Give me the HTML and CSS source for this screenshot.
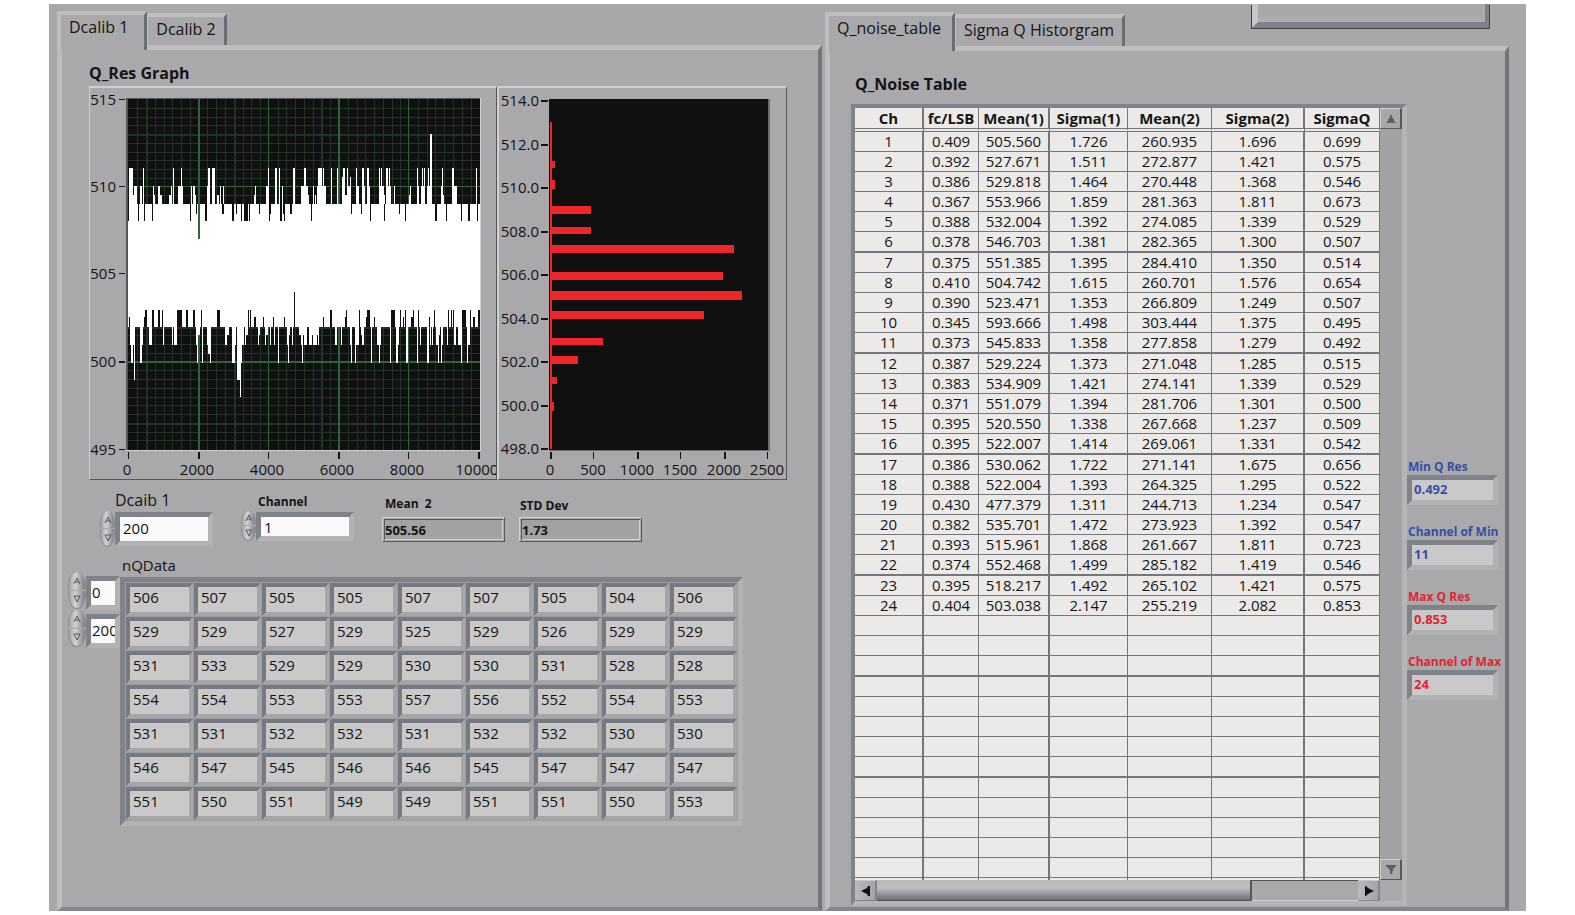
FILE: index.html
```html
<!DOCTYPE html>
<html lang="en">
<head>
  <meta charset="UTF-8">
  <meta name="viewport" content="width=device-width, initial-scale=1.0">
  <title>Dcalib | Q noise</title>
  <link rel="stylesheet" href="styles.css">
</head>
<body>
  <main class="front-panel">

    <section class="tab-control">
      <div class="tab-strip calib-tabs">
        <button type="button" class="tab active">Dcalib 1</button>
        <button type="button" class="tab">Dcalib 2</button>
      </div>
      <div class="tab-page calib">
        <h2>Q_Res Graph</h2>
        <div class="graphs">
          <div class="graph">
            <svg id="wave" width="406" height="391" viewBox="90 88 406 391" role="img" aria-label="Q_Res Graph">
              <rect x="126" y="98" width="355" height="353" fill="#d0d0d2"/>
              <rect x="126" y="98" width="354" height="352" fill="#55565a"/>
              <rect x="128" y="99" width="352" height="351" fill="#101010"/>
              <g id="grid"></g>
              <g id="trace" transform="scale(0.333333)"></g>
              <g id="wave-axis"></g>
            </svg>
          </div>
          <div class="graph">
            <svg id="histogram" width="287" height="391" viewBox="499 88 287 391" role="img" aria-label="Histogram">
              <rect x="549" y="99" width="221" height="352" fill="#6c6e73"/>
              <rect x="549" y="99" width="219" height="351" fill="#101010"/>
              <g id="bars" fill="#ee2529">
                <rect x="550" y="122" width="2" height="327"/>
              </g>
              <g id="hist-axis"></g>
            </svg>
          </div>
        </div>

        <div class="controls">
          <div class="control">
            <label for="dcaib">Dcaib 1</label>
            <div class="numeric">
              <span class="spinner tall"></span>
              <input id="dcaib" class="well white" type="text" value="200">
            </div>
          </div>
          <div class="control small channel">
            <label for="channel">Channel</label>
            <div class="numeric">
              <span class="spinner"></span>
              <input id="channel" class="well white" type="text" value="1">
            </div>
          </div>
          <div class="control small flat mean">
            <label for="mean">Mean&nbsp; 2</label>
            <input id="mean" type="text" value="505.56" readonly>
          </div>
          <div class="control small flat std">
            <label for="std">STD Dev</label>
            <input id="std" type="text" value="1.73" readonly>
          </div>
        </div>

        <h3 id="nq-label">nQData</h3>
        <div class="array">
          <div class="array-index">
            <div class="numeric">
              <span class="spinner tall"></span>
              <input class="well white" type="text" value="0" aria-label="Row index">
            </div>
            <div class="numeric">
              <span class="spinner tall"></span>
              <input class="well white" type="text" value="200" aria-label="Column index">
            </div>
          </div>
          <table class="array-data" id="nqdata" aria-labelledby="nq-label"></table>
        </div>
      </div>
    </section>

    <section class="tab-control">
      <div class="tab-strip noise-tabs">
        <button type="button" class="tab active">Q_noise_table</button>
        <button type="button" class="tab">Sigma Q Historgram</button>
        <button type="button" class="big-button" aria-label="Run"></button>
      </div>
      <div class="tab-page noise">
        <div class="noise-main">
          <h2>Q_Noise Table</h2>
          <div class="table-frame">
            <div class="table-view">
              <table class="noise-table">
                <colgroup>
                  <col class="c-ch"><col class="c-fc"><col class="c-m1"><col class="c-s1"><col class="c-m2"><col class="c-s2"><col class="c-sq">
                </colgroup>
                <thead>
                  <tr><th>Ch</th><th>fc/LSB</th><th>Mean(1)</th><th>Sigma(1)</th><th>Mean(2)</th><th>Sigma(2)</th><th>SigmaQ</th></tr>
                </thead>
                <tbody id="noise-rows"></tbody>
              </table>
            </div>
            <div class="vscroll">
              <button type="button" aria-label="Scroll up"><svg width="10" height="10" viewBox="0 0 10 10"><path d="M5 0L7 5H8V7L10 9H0L2 7V5H3Z" fill="#5d5f65"/></svg></button>
              <button type="button" aria-label="Scroll down"><svg width="10" height="10" viewBox="0 0 10 10"><path d="M0 0H10V1L7 4L6 9H4V5L0 1Z" fill="#5d5f65"/></svg></button>
            </div>
            <div class="hscroll">
              <button type="button" aria-label="Scroll left"><svg width="10" height="10" viewBox="0 0 10 10"><path d="M0 5L6 2L7 0H9V10H7L6 8Z" fill="#101010"/></svg></button>
              <div class="track"><div class="thumb"></div></div>
              <button type="button" aria-label="Scroll right"><svg width="10" height="10" viewBox="0 0 10 10"><path d="M10 5L4 2L2 0H1V10H2L4 8Z" fill="#101010"/></svg></button>
            </div>
          </div>
        </div>
        <div class="results">
          <div class="result min">
            <label for="min-q">Min Q Res</label>
            <input id="min-q" class="well" type="text" value="0.492" readonly>
          </div>
          <div class="result min">
            <label for="min-ch">Channel of Min</label>
            <input id="min-ch" class="well" type="text" value="11" readonly>
          </div>
          <div class="result max">
            <label for="max-q">Max Q Res</label>
            <input id="max-q" class="well" type="text" value="0.853" readonly>
          </div>
          <div class="result max">
            <label for="max-ch">Channel of Max</label>
            <input id="max-ch" class="well" type="text" value="24" readonly>
          </div>
        </div>
      </div>
    </section>

  </main>
  <script src="script.js"></script>
</body>
</html>
```
FILE: styles.css
```css
* {
  box-sizing: border-box;
}
body {
  margin: 0;
  background: #fff;
  color: #141414;
  font-family: "Open Sans", "Noto Sans", sans-serif;
  font-size: 15px;
  line-height: 20px;
}
button, input {
  font: inherit;
  color: inherit;
  margin: 0;
  padding: 0;
}
h2, h3 {
  margin: 0;
  font-size: 16px;
  line-height: 20px;
}
h3 {
  font-size: 15px;
  font-weight: normal;
}
.front-panel {
  display: grid;
  grid-template-columns: 765fr 684fr;
  gap: 3px;
  min-height: calc(100vh - 8px);
  margin: 4px 49px 0;
  padding: 0 17px 0 8px;
  background: #a8a8aa;
}

/* tabs */
.tab-control {
  display: flex;
  flex-direction: column;
  min-width: 0;
}
.tab-strip {
  display: flex;
  align-items: flex-end;
  height: 42px;
}
.calib-tabs {
  height: 41px;
}
.tab {
  height: 32px;
  padding: 0 8px 5px 8px;
  background: #a9a9ab;
  border: solid;
  border-width: 4px 3px 0 1px;
  border-color: #bfbfc1 #6b6d73 #a9a9ab #bfbfc1;
  border-radius: 2px 2px 0 0;
  font-size: 16px;
  white-space: nowrap;
}
.tab.active {
  position: relative;
  height: 39px;
  margin-bottom: -5px;
  padding: 0 16px 12px 8px;
  border-left-width: 4px;
}
.noise-tabs .tab.active {
  padding-right: 11px;
}
.big-button {
  align-self: flex-start;
  width: 237px;
  height: 24px;
  margin: 0 20px 0 auto;
  background: #a8a8aa;
  border: solid;
  border-width: 0 4px 6px 6px;
  border-color: #8a8c92 #7d8086 #7d8086 #c6c6c8;
  box-shadow: inset 0 -4px 4px #b0b0b2, 1px 1px 0 #3d3e42, -1px 1px 0 #3d3e42;
}
.tab-page {
  flex: 1;
  background: #a9a9ab;
  border: solid;
  border-width: 5px 4px 4px 5px;
  border-color: #bdbdbf #73757b #84868b #bdbdbf;
}

/* left page */
.calib {
  padding: 13px 0 0 6px;
}
.calib h2 {
  margin: 0 0 3px 21px;
}
.graphs {
  display: flex;
  margin-left: 21px;
}
.graph {
  border: solid;
  border-width: 2px 1px 1px 1px;
  border-color: #d0d0d2 #55565a #55565a #d0d0d2;
}
.graph + .graph {
  border-left-width: 2px;
}
.graph svg {
  display: block;
}
.graph svg text {
  font-size: 15px;
  fill: #141414;
}
#grid, #trace, #bars, .tick {
  shape-rendering: crispEdges;
}
.controls {
  display: flex;
  align-items: flex-start;
  margin: 10px 0 8px 32px;
}
.control label {
  display: block;
  margin: 0 0 2px 15px;
  font-size: 16px;
}
.control.small {
  padding-top: 2px;
}
.control.small label {
  margin: 0 0 0 17px;
  font-size: 12px;
  font-weight: bold;
}
.channel {
  margin-left: 28px;
}
.control.flat {
  padding-top: 4px;
}
.control.flat label {
  margin: 0 0 3px 3px;
}
.mean {
  margin-left: 28px;
}
.std {
  margin-left: 14px;
}
.control.std label {
  margin: 2px 0 1px 1px;
}
.flat input {
  display: block;
  width: 123px;
  height: 25px;
  padding-left: 2px;
  background: #a2a2a4;
  border: 1px solid;
  border-color: #d0d0d2 #55565a #55565a #d0d0d2;
  box-shadow: inset 0 0 0 1px #a8a8aa, inset 2px 2px 0 #55565a, inset -2px -2px 0 #d0d0d2;
  font-size: 13px;
  font-weight: bold;
}
.well {
  display: block;
  padding-bottom: 2px;
  background: #c9c9c9;
  border: 5px solid;
  border-color: #7f8288 #b2b2b4 #b2b2b4 #7f8288;
  border-radius: 0;
}
.well.white {
  background: #fafafa;
}
.numeric {
  display: flex;
}
.controls .numeric .well {
  width: 98px;
  height: 34px;
  padding-left: 3px;
}
.controls .channel .numeric .well {
  height: 29px;
  padding-bottom: 0;
}
.spinner {
  display: flex;
  flex-direction: column;
  gap: 1px;
  width: 15px;
  height: 30px;
  margin-top: -1px;
}
.spinner.tall {
  height: 36px;
}
.spinner button {
  flex: 1;
  display: flex;
  align-items: center;
  justify-content: center;
  min-height: 0;
  background: linear-gradient(90deg, #a2a3a6, #d2d2d4 40%, #7d8086);
  border: 1px solid #8b8d92;
  border-width: 0 1px;
  border-radius: 50% 50% 2px 2px / 80% 80% 2px 2px;
}
.spinner button + button {
  border-bottom-width: 1px;
  border-radius: 2px 2px 50% 50% / 2px 2px 80% 80%;
}

/* nQData array */
#nq-label {
  margin-left: 54px;
}
.array {
  display: flex;
  align-items: flex-start;
  margin-top: 2px;
}
.array-index {
  width: 52px;
  margin-top: -5px;
}
.array-index .numeric {
  height: 38px;
}
.array-index .spinner {
  width: 18px;
  height: 37px;
  margin-top: 0;
}
.array-index .well {
  width: 34px;
  height: 34px;
  margin-top: 4px;
  padding-left: 1px;
}
.array-data {
  border: 5px solid;
  border-color: #7f8288 #b2b2b4 #b2b2b4 #7f8288;
  border-spacing: 1px;
  background: #9c9da1;
}
.array-data td {
  width: 67px;
  height: 33px;
  padding: 0 0 5px 3px;
  background: #c9c9c9;
  border: 4px solid;
  border-color: #777a81 #a6a6a8 #a6a6a8 #777a81;
}

/* right page */
.noise {
  display: flex;
  padding: 22px 0 1px 21px;
}
.noise-main {
  flex: 1;
  display: flex;
  flex-direction: column;
  min-width: 0;
}
.noise h2 {
  margin: 1px 0 10px 4px;
}
.table-frame {
  flex: 1;
  display: grid;
  grid-template-columns: 1fr 22px;
  grid-template-rows: 1fr 21px;
  border: solid;
  border-width: 4px 5px 5px 4px;
  border-color: #7f8288 #b5b5b7 #b5b5b7 #7f8288;
}
.table-view {
  height: 772px;
  overflow: hidden;
}
.noise-table {
  width: 100%;
  table-layout: fixed;
  border-collapse: separate;
  border-spacing: 0;
  background: #ebeae9;
  text-align: center;
}
.c-ch { width: 69px; }
.c-fc { width: 55px; }
.c-m1 { width: 71px; }
.c-s1 { width: 78px; }
.c-m2 { width: 84px; }
.c-s2 { width: 93px; }
.c-sq { width: 75px; }
.noise-table th,
.noise-table td {
  height: 20px;
  padding: 0;
  line-height: 19px;
  border: solid #74777c;
  border-width: 0 1px 1px 0;
}
.noise-table th {
  height: 24px;
  line-height: 20px;
  border-bottom: 4px double #74777c;
}
.noise-table th:nth-child(1), .noise-table td:nth-child(1),
.noise-table th:nth-child(3), .noise-table td:nth-child(3),
.noise-table th:nth-child(6), .noise-table td:nth-child(6) {
  border-right-width: 2px;
}
.noise-table .thick td {
  height: 21px;
  border-bottom-width: 2px;
}
.vscroll {
  display: flex;
  flex-direction: column;
  justify-content: space-between;
  background: #a2a2a4;
}
.vscroll button,
.hscroll button {
  display: flex;
  align-items: center;
  justify-content: center;
  width: 22px;
  height: 21px;
  background: #a8a8aa;
  border: solid;
  border-width: 1px 2px 1px 1px;
  border-color: #d0d0d2 #55565a #55565a #d0d0d2;
}
.hscroll {
  display: flex;
}
.hscroll button {
  background: linear-gradient(90deg, #b9b9bb, #a2a4a9);
  border-color: #c6c6c8 #84868b #84868b #b9b9bb;
}
.track {
  flex: 1;
  border-top: 1px solid #55565a;
  border-bottom: 1px solid #d0d0d2;
}
.thumb {
  width: 78%;
  height: 21px;
  margin-top: -1px;
  background: linear-gradient(#b9b9bb, #bebec0 40%, #6b6e76);
  border-right: 2px solid #55565a;
  border-bottom: 1px solid #55565a;
}
.results {
  width: 98px;
  padding-top: 386px;
}
.result {
  height: 65px;
  font-size: 12px;
  font-weight: bold;
}
.result label {
  display: block;
  margin-left: 1px;
  line-height: 16px;
  white-space: nowrap;
}
.result .well {
  width: 91px;
  height: 30px;
  padding-left: 2px;
  font-size: 13px;
}
.min {
  color: #3350a8;
}
.max {
  color: #e02430;
}
```
FILE: script.js
```js
const SVG = 'http://www.w3.org/2000/svg';

function draw(parent, tag, attrs, text) {
  const el = document.createElementNS(SVG, tag);
  for (const key in attrs) el.setAttribute(key, attrs[key]);
  if (text !== undefined) el.textContent = text;
  document.getElementById(parent).appendChild(el);
}

function box(parent, x, y, width, height, fill) {
  const attrs = { x, y, width, height };
  if (fill) attrs.fill = fill;
  draw(parent, 'rect', attrs);
}

// spinner buttons
document.querySelectorAll('.spinner').forEach(spinner => {
  spinner.innerHTML =
    '<button type="button" aria-label="Increase"><svg width="8" height="8" viewBox="0 0 8 8"><path d="M1 7L4 1L7 7M2 5H6" fill="none" stroke="#55575c"/></svg></button>' +
    '<button type="button" aria-label="Decrease"><svg width="8" height="8" viewBox="0 0 8 8"><path d="M1 1H7L4 7Z" fill="none" stroke="#55575c"/></svg></button>';
});

// waveform grid
for (let i = 1; i < 40; i++) {
  if (i % 8) box('grid', Math.round(128.5 + i * 8.77), 99, i % 10 === 2 ? 2 : 1, 351, '#203324');
}
for (let i = 1; i < 40; i++) {
  if (i % 10) box('grid', 128, Math.round(99 + i * 8.75), 352, i % 11 === 4 ? 2 : 1, '#203324');
}
box('grid', 128, 186, 352, 1, '#2f6339');
box('grid', 128, 361, 352, 2, '#2f6339');
box('grid', 198, 99, 2, 351, '#2f6339');
box('grid', 268, 99, 1, 351, '#2f6339');
box('grid', 338, 99, 2, 351, '#2f6339');
box('grid', 408, 99, 1, 351, '#2f6339');

// waveform trace, columns given in thirds of a pixel from the plot
function columns(list, top, bottom, fill) {
  list.split(' ').forEach(item => {
    const [from, to] = item.split('-').map(Number);
    box('trace', from + 120, top, to - from, bottom - top, fill);
  });
}
const WHITE = '#fff', BLACK = '#101010';
box('trace', 384, 612, 1056, 369, WHITE);
columns('1170-1176', 402, 612, WHITE);
columns('267-279 309-312 399-402 423-426 504-510 516-525 684-687 705-711 717-720 759-765 792-798 834-846 849-852 873-876 891-894 909-915 921-924 948-951 966-972 981-987 1017-1020 1023-1026 1038-1044 1047-1050 1131-1134 1146-1149 1152-1155 1164-1167 1206-1209 1236-1242 1308-1311', 504, 612, WHITE);
columns('930-933 906-909', 531, 612, WHITE);
columns('282-291 300-306 339-342 354-360 393-396 414-429 453-456 459-465 501-510 516-525 540-543 549-552 645-648 678-687 726-729 783-804 819-822 831-858 906-915 921-933 948-957 966-975 981-990 1017-1032 1038-1053 1062-1065 1110-1113 1131-1137 1143-1155 1161-1176 1203-1209 1236-1251 1308-1311', 558, 612, WHITE);
columns('279-291 342-345 360-366 387-396 465-468 531-537 642-648 804-807 825-828 915-921 1032-1035 1107-1113 1209-1212', 585, 612, WHITE);
columns('264-267 294-297 312-315 336-339 450-453 495-501 576-582 603-606 612-624 627-630 687-690 720-726 732-735 813-816 990-993 1032-1035 1095-1098 1185-1191 1218-1221 1263-1266 1284-1290 1311-1314', 612, 663, BLACK);
columns('468-471 546-552 588-591 657-660 690-693 729-732 750-756 933-936 963-966 1077-1080', 612, 641, BLACK);
columns('474-480', 612, 717, '#2f6339');

columns('474-480 561-567 618-624 657-660 678-684 747-750 777-783 789-792 816-819 831-834 963-966 1197-1200', 981, 1005, WHITE);
columns('270-273 279-282 306-309 327-336 369-372 396-399 402-411 468-471 501-504 555-561 585-588 606-612 615-618 654-657 675-678 690-693 702-705 741-744 756-759 783-786 792-801 807-816 819-831 834-837 885-891 903-906 930-933 948-957 966-972 1011-1017 1020-1023 1074-1077 1140-1143 1170-1173 1176-1179 1188-1194 1206-1209 1221-1224 1242-1248 1254-1263 1284-1290', 981, 1035, WHITE);
columns('504-510', 981, 1062, WHITE);
columns('273-279 300-306 471-474 486-489 510-513 576-585 603-606 714-717 744-747 786-789 933-936 945-948 993-996 1017-1020 1050-1053 1068-1074 1098-1104 1131-1134 1161-1167 1194-1197 1203-1206 1263-1266 1281-1284', 981, 1089, WHITE);
columns('282-285 591-600', 981, 1140, WHITE);
columns('600-603', 981, 1191, WHITE);
columns('762-765', 876, 981, BLACK);
columns('315-321 336-342 354-360 366-369 411-426 438-444 459-465 483-486 531-540 624-627 630-633 870-876 918-921 957-960 981-990 1053-1065 1080-1083 1095-1098 1119-1122 1134-1137 1182-1185 1224-1227 1233-1236 1239-1242 1266-1278 1290-1293 1314-1320', 930, 981, BLACK);
columns('267-270 312-315 642-648 669-672 699-702 732-735 849-852 915-918 978-981 1002-1005 1089-1092 1113-1119 1167-1170 1299-1305', 951, 981, BLACK);

// waveform axes
function tick(parent, x, y, width, height) {
  draw(parent, 'rect', { x, y, width, height, class: 'tick', fill: '#141414' });
}
[[515, 99], [510, 186], [505, 273], [500, 361], [495, 449]].forEach(([value, y]) => {
  tick('wave-axis', 119, y, 6, value === 500 ? 2 : 1);
  draw('wave-axis', 'text', { x: 116, y: y + 6, 'text-anchor': 'end' }, value);
});
[[0, 128], [2000, 198], [4000, 268], [6000, 338], [8000, 408], [10000, 478]].forEach(([value, x]) => {
  tick('wave-axis', x, 452, value % 4000 ? 2 : 1, 7);
  draw('wave-axis', 'text', { x: x - 1, y: 475, 'text-anchor': 'middle' }, value);
});

// histogram: [top, height, right edge]
[[161, 7, 555], [180, 9, 555], [206, 8, 591], [227, 7, 591], [245, 8, 734], [272, 8, 723],
 [291, 9, 742], [311, 8, 704], [338, 7, 603], [356, 8, 578], [377, 7, 557], [402, 9, 554]
].forEach(([top, height, right]) => box('bars', 551, top, right - 551, height));

['514.0', '512.0', '510.0', '508.0', '506.0', '504.0', '502.0', '500.0', '498.0'].forEach((value, i) => {
  const y = Math.round(100 + i * 43.5);
  tick('hist-axis', 541, y, 7, 2);
  draw('hist-axis', 'text', { x: 539, y: y + 6, 'text-anchor': 'end' }, value);
});
[[0, 550], [500, 593], [1000, 637], [1500, 680], [2000, 724], [2500, 767]].forEach(([value, x]) => {
  tick('hist-axis', x, 452, value % 1000 ? 1 : 2, 7);
  draw('hist-axis', 'text', { x, y: 475, 'text-anchor': 'middle' }, value);
});

// nQData
const nqdata = `506 507 505 505 507 507 505 504 506
529 529 527 529 525 529 526 529 529
531 533 529 529 530 530 531 528 528
554 554 553 553 557 556 552 554 553
531 531 532 532 531 532 532 530 530
546 547 545 546 546 545 547 547 547
551 550 551 549 549 551 551 550 553`;
document.getElementById('nqdata').innerHTML = nqdata.split('\n').map(row =>
  '<tr>' + row.split(' ').map(value => '<td>' + value + '</td>').join('') + '</tr>'
).join('');

// Q_Noise Table
const noise = `0.409 505.560 1.726 260.935 1.696 0.699
0.392 527.671 1.511 272.877 1.421 0.575
0.386 529.818 1.464 270.448 1.368 0.546
0.367 553.966 1.859 281.363 1.811 0.673
0.388 532.004 1.392 274.085 1.339 0.529
0.378 546.703 1.381 282.365 1.300 0.507
0.375 551.385 1.395 284.410 1.350 0.514
0.410 504.742 1.615 260.701 1.576 0.654
0.390 523.471 1.353 266.809 1.249 0.507
0.345 593.666 1.498 303.444 1.375 0.495
0.373 545.833 1.358 277.858 1.279 0.492
0.387 529.224 1.373 271.048 1.285 0.515
0.383 534.909 1.421 274.141 1.339 0.529
0.371 551.079 1.394 281.706 1.301 0.500
0.395 520.550 1.338 267.668 1.237 0.509
0.395 522.007 1.414 269.061 1.331 0.542
0.386 530.062 1.722 271.141 1.675 0.656
0.388 522.004 1.393 264.325 1.295 0.522
0.430 477.379 1.311 244.713 1.234 0.547
0.382 535.701 1.472 273.923 1.392 0.547
0.393 515.961 1.868 261.667 1.811 0.723
0.374 552.468 1.499 285.182 1.419 0.546
0.395 518.217 1.492 265.102 1.421 0.575
0.404 503.038 2.147 255.219 2.082 0.853`.split('\n');
const thick = [6, 11, 16, 22, 27, 32];
let rows = '';
for (let ch = 1; ch <= 38; ch++) {
  const cells = ch <= 24 ? [ch, ...noise[ch - 1].split(' ')] : Array(7).fill('');
  rows += (thick.includes(ch) ? '<tr class="thick">' : '<tr>') +
    cells.map(value => '<td>' + value + '</td>').join('') + '</tr>';
}
document.getElementById('noise-rows').innerHTML = rows;
```
